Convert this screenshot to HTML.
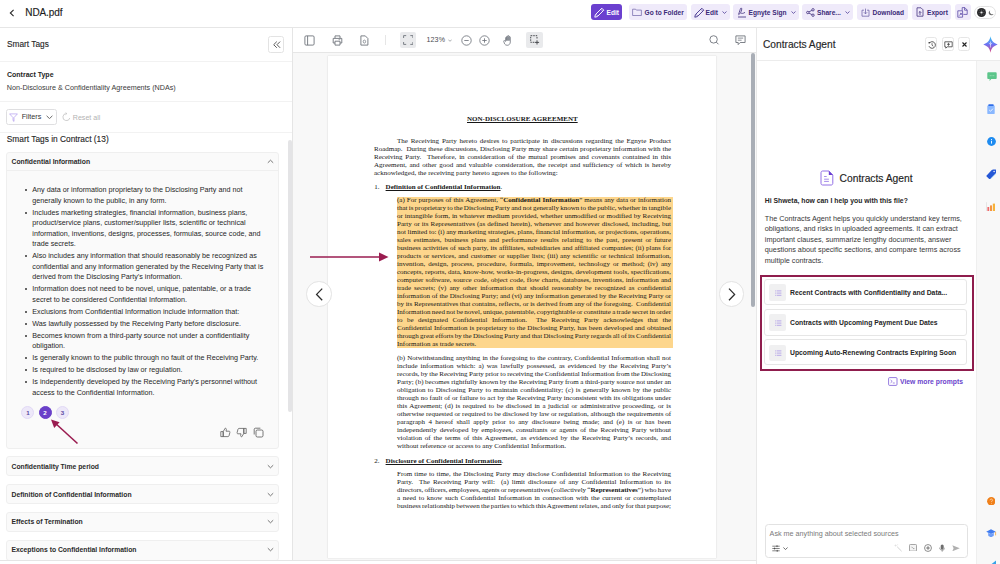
<!DOCTYPE html>
<html><head><meta charset="utf-8">
<style>
*{box-sizing:border-box;margin:0;padding:0}
html,body{width:1000px;height:564px;overflow:hidden;background:#fff;font-family:"Liberation Sans",sans-serif;color:#222}
.a{position:absolute}
.nw{white-space:nowrap}
svg{display:block}
/* top bar */
#top{left:0;top:0;width:1000px;height:28px;border-bottom:1px solid #e6e6e6;background:#fff}
.tb{position:absolute;top:4px;height:16px;border-radius:3px;background:#efeafa;color:#3b2a78;font-weight:bold;font-size:6.6px;line-height:17px;white-space:nowrap}
/* left */
#left{left:0;top:28px;width:293px;height:533px;border-right:1px solid #e5e5e5;border-bottom:1px solid #e5e5e5;background:#fff}
.sep{position:absolute;left:0;width:292px;height:1px;background:#f2f2f2}
.acc{position:absolute;left:6px;width:273px;background:#fafafa;border:1px solid #efefef;border-radius:3px}
.acct{position:absolute;left:11.5px;font-weight:bold;font-size:6.8px;line-height:10px;color:#2a2a2a;white-space:nowrap}
.ul{position:absolute;left:32.3px;font-size:7.2px;line-height:10.5px;color:#262626;white-space:nowrap}
.ul div{position:relative;margin-bottom:1.5px}
.ul div:before{content:"";position:absolute;left:-7.6px;top:4.1px;width:2.4px;height:2.4px;border-radius:50%;background:#333}
.pg{position:absolute;top:405.9px;width:13px;height:13px;border-radius:50%;background:#ede8f9;border:0.6px solid #e2d9f6;color:#5b48a0;font-size:6.2px;line-height:11.8px;text-align:center;font-weight:bold}
#viewer{left:293px;top:28px;width:464px;height:533px;background:#f8f8f8;border-bottom:1px solid #e5e5e5;overflow:hidden}
.pdf{position:absolute;font-family:"Liberation Serif",serif;font-size:7px;line-height:8px;color:#161616;white-space:nowrap}
.pdf div{height:8px;overflow:visible}
.j{text-align:justify;text-align-last:justify}
.pdf b{font-weight:bold}
.pdf b[style]{text-decoration-thickness:0.55px;text-underline-offset:0.9px}
.ic{position:absolute}
#agent{left:756px;top:28px;width:220px;height:536px;background:#fff;border-left:1px solid #e8e8e8}
#rail{left:975.8px;top:60.5px;width:24.2px;height:503.5px;background:#f8f8f8;border-left:1px solid #efefef}
.hb{position:absolute;top:37.3px;width:12px;height:13.3px;border:1px solid #e6e6e6;border-radius:2.5px;background:#fff}
.card{position:absolute;left:763.8px;width:203.2px;border:1px solid #e6e6e6;border-radius:3px;background:#fff}
.cico{position:absolute;left:4.5px;top:4.3px;width:16.5px;height:16.5px;border-radius:2px;background:#f0f0f1}
.ctx{position:absolute;left:25.2px;font-weight:bold;font-size:6.8px;line-height:10px;color:#262626;white-space:nowrap}
</style></head>
<body>
<div id="top" class="a">
<svg class="a" style="left:9px;top:8.5px" width="6" height="8" viewBox="0 0 6 8"><path d="M4.6 0.8L1.3 4l3.3 3.2" fill="none" stroke="#262626" stroke-width="1.05"/></svg>
<div class="a nw" style="left:25.3px;top:7.2px;font-size:10px;line-height:12px;color:#1d1d1d;letter-spacing:-0.1px;-webkit-text-stroke:0.15px #1d1d1d">NDA.pdf</div>
<div class="tb" style="left:591px;width:31px;background:#6b40cf;color:#fff">
 <svg class="a" style="left:3.2px;top:3px" width="11" height="11" viewBox="0 0 11 11"><path d="M0.8 10.2L1.4 7.6 7.8 1.2 9.8 3.2 3.4 9.6z" fill="none" stroke="#fff" stroke-width="0.95" stroke-linejoin="round"/><path d="M2 7.2l1.8 1.8M6.8 2.2l1.8 1.8" stroke="#fff" stroke-width="0.6"/></svg>
 <span class="a" style="left:15.5px;top:0">Edit</span></div>
<div class="tb" style="left:629px;width:58px">
 <svg class="a" style="left:3px;top:4px" width="10" height="8" viewBox="0 0 10 8"><path d="M0.6 1.2h3l0.8 0.9h5v5.4H0.6z" fill="none" stroke="#6d62a6" stroke-width="0.7"/></svg>
 <span class="a" style="left:15.5px;top:0">Go to Folder</span></div>
<div class="tb" style="left:690.5px;width:39px">
 <svg class="a" style="left:3.2px;top:3px" width="11" height="11" viewBox="0 0 11 11"><path d="M0.8 10.2L1.4 7.6 7.8 1.2 9.8 3.2 3.4 9.6z" fill="none" stroke="#4a3a90" stroke-width="0.95" stroke-linejoin="round"/><path d="M2 7.2l1.8 1.8M6.8 2.2l1.8 1.8" stroke="#4a3a90" stroke-width="0.6"/></svg>
 <span class="a" style="left:15px;top:0">Edit</span>
 <svg class="a" style="left:31px;top:6.5px" width="5" height="3" viewBox="0 0 5 3"><path d="M0.5 0.5L2.5 2.4 4.5 0.5" fill="none" stroke="#4f3f98" stroke-width="0.8"/></svg></div>
<div class="tb" style="left:733px;width:65.5px">
 <svg class="a" style="left:3.5px;top:3px" width="10" height="11" viewBox="0 0 10 11"><path d="M1.5 7.5C2.5 5 3 2.5 3.8 1.2 4.6 0.6 5.2 1.8 4.2 4.2 3.5 6 2.6 7.2 1.8 7.8M4 6.5C5 5.8 5.5 6.8 6.4 6.2L8 5.4M1 10h8" fill="none" stroke="#3b2a78" stroke-width="0.8"/></svg>
 <span class="a" style="left:15.5px;top:0">Egnyte Sign</span>
 <svg class="a" style="left:58px;top:6.5px" width="5" height="3" viewBox="0 0 5 3"><path d="M0.5 0.5L2.5 2.4 4.5 0.5" fill="none" stroke="#4f3f98" stroke-width="0.8"/></svg></div>
<div class="tb" style="left:802px;width:51px">
 <svg class="a" style="left:3.5px;top:3.5px" width="9" height="9" viewBox="0 0 9 9"><circle cx="1.8" cy="4.5" r="1.2" fill="none" stroke="#3b2a78" stroke-width="0.8"/><circle cx="7" cy="1.8" r="1.2" fill="none" stroke="#3b2a78" stroke-width="0.8"/><circle cx="7" cy="7.2" r="1.2" fill="none" stroke="#3b2a78" stroke-width="0.8"/><path d="M2.9 3.9l3-1.5M2.9 5.1l3 1.5" stroke="#3b2a78" stroke-width="0.8"/></svg>
 <span class="a" style="left:15px;top:0">Share...</span>
 <svg class="a" style="left:43px;top:6.5px" width="5" height="3" viewBox="0 0 5 3"><path d="M0.5 0.5L2.5 2.4 4.5 0.5" fill="none" stroke="#4f3f98" stroke-width="0.8"/></svg></div>
<div class="tb" style="left:857px;width:51px">
 <svg class="a" style="left:4px;top:3.5px" width="9" height="9" viewBox="0 0 9 9"><path d="M3 2.2H1v6h7v-6H6M4.5 0.6v5.2M2.8 4.2l1.7 1.7 1.7-1.7" fill="none" stroke="#6d62a6" stroke-width="0.75"/></svg>
 <span class="a" style="left:15.5px;top:0">Download</span></div>
<div class="tb" style="left:911.5px;width:39.5px">
 <svg class="a" style="left:4px;top:3px" width="8" height="10" viewBox="0 0 8 10"><path d="M1 0.8h4l2 2v6.4H1zM4 8V4.5M2.7 5.8L4 4.5l1.3 1.3" fill="none" stroke="#3b2a78" stroke-width="0.75"/></svg>
 <span class="a" style="left:15.5px;top:0">Export</span></div>
<div class="tb" style="left:954.5px;width:16.5px">
 <svg class="a" style="left:2.5px;top:2.8px" width="11" height="11" viewBox="0 0 11 11"><path d="M5.2 3.6V0.6h2.6l2.4 2.4v4.4H6.4M7.6 0.6v2.6h2.6M0.8 3.8h4.8v6.4H0.8zM2.2 8.6l2-2M4.4 7.8V6.4H3" fill="none" stroke="#5a4aa6" stroke-width="0.8" stroke-linejoin="round"/></svg></div>
<div class="a" style="left:974.3px;top:5.8px;width:22.2px;height:12.8px;border:0.8px solid #e3e3e3;border-radius:6.5px;background:#fff">
 <div class="a" style="left:1.3px;top:1.2px;width:9.2px;height:9.2px;border-radius:50%;background:#2b2b2d"></div>
 <svg class="a" style="left:2.4px;top:2.3px" width="7" height="7" viewBox="0 0 7 7"><circle cx="3.5" cy="3.5" r="1.1" fill="#eee"/><path d="M3.5 0.6v1M3.5 5.4v1M0.6 3.5h1M5.4 3.5h1M1.5 1.5l0.7 0.7M4.8 4.8l0.7 0.7M1.5 5.5l0.7-0.7M4.8 2.2l0.7-0.7" stroke="#999" stroke-width="0.45"/></svg>
 <svg class="a" style="left:12.6px;top:3.3px" width="6" height="6" viewBox="0 0 6 6"><path d="M2.2 0.4A2.6 2.6 0 1 0 5.6 4 2.6 2.6 0 0 1 2.2 0.4z" fill="#6a6a6a"/></svg></div>
</div>
<div id="left" class="a"></div>
<div class="a nw" style="left:7px;top:38.9px;font-size:8.3px;line-height:10px;color:#262626;-webkit-text-stroke:0.12px #262626">Smart Tags</div>
<div class="a" style="left:268px;top:36px;width:16.3px;height:16.6px;border:1px solid #e3e3e3;border-radius:2.5px;background:#fff">
 <svg class="a" style="left:3.6px;top:3.9px" width="8" height="8" viewBox="0 0 8 8"><path d="M3.8 0.6L0.7 3.7 3.8 6.8M7.1 0.6L4 3.7 7.1 6.8" fill="none" stroke="#333" stroke-width="0.8"/></svg></div>
<div class="sep" style="top:61px"></div>
<div class="a nw" style="left:7px;top:69.8px;font-size:7px;line-height:10px;font-weight:bold;color:#262626">Contract Type</div>
<div class="a nw" style="left:6.8px;top:82.5px;font-size:7.2px;line-height:10px;color:#3a3a3a">Non-Disclosure &amp; Confidentiality Agreements (NDAs)</div>
<div class="sep" style="top:100.5px"></div>
<div class="a" style="left:6px;top:109px;width:50.8px;height:15.6px;border:1px solid #dfdfe1;border-radius:2.5px;background:#fff">
 <svg class="a" style="left:2.3px;top:3.2px" width="9" height="9" viewBox="0 0 9 9"><path d="M0.6 0.9h7.8L5 4.6v3.8L4 7.6V4.6z" fill="none" stroke="#a58ceb" stroke-width="0.6" stroke-linejoin="round"/></svg>
 <span class="a nw" style="left:14.7px;top:2.3px;font-size:7.2px;line-height:10px;color:#333">Filters</span>
 <svg class="a" style="left:38.6px;top:4.6px" width="7" height="4.5" viewBox="0 0 7 4.5"><path d="M0.6 0.8L3.5 3.6 6.4 0.8" fill="none" stroke="#444" stroke-width="0.8"/></svg></div>
<svg class="a" style="left:61.6px;top:112.3px" width="9" height="9.5" viewBox="0 0 9 9.5"><path d="M4.5 1.6A3.5 3.5 0 1 0 7.8 6" fill="none" stroke="#bdbdbd" stroke-width="0.75"/><path d="M3.6 0.5L4.8 1.6 3.6 2.7" fill="none" stroke="#bdbdbd" stroke-width="0.75"/></svg>
<div class="a nw" style="left:72.8px;top:112.5px;font-size:7.1px;line-height:10px;color:#b3b3b3">Reset all</div>
<div class="sep" style="top:132px"></div>
<div class="a nw" style="left:6.8px;top:134.1px;font-size:8.35px;line-height:10px;color:#262626;-webkit-text-stroke:0.12px #262626">Smart Tags in Contract (13)</div>
<div class="a" style="left:288px;top:139.5px;width:3.5px;height:272px;border-radius:2px;background:#e4e4e6"></div>
<div class="acc" style="top:152.2px;height:297.3px">
 <div class="a" style="left:0;top:16.6px;width:271px;height:1px;background:#efefef"></div></div>
<div class="acct" style="top:156.8px">Confidential Information</div>
<svg class="a" style="left:267px;top:159px" width="7" height="5" viewBox="0 0 7 5"><path d="M0.8 3.8L3.5 1.2 6.2 3.8" fill="none" stroke="#555" stroke-width="0.8"/></svg>
<div class="ul" style="top:185px">
<div>Any data or information proprietary to the Disclosing Party and not<br>generally known to the public, in any form.</div>
<div>Includes marketing strategies, financial information, business plans,<br>product/service plans, customer/supplier lists, scientific or technical<br>information, inventions, designs, processes, formulas, source code, and<br>trade secrets.</div>
<div>Also includes any information that should reasonably be recognized as<br>confidential and any information generated by the Receiving Party that is<br>derived from the Disclosing Party&#8217;s information.</div>
<div>Information does not need to be novel, unique, patentable, or a trade<br>secret to be considered Confidential Information.</div>
<div>Exclusions from Confidential Information include information that:</div>
<div>Was lawfully possessed by the Receiving Party before disclosure.</div>
<div>Becomes known from a third-party source not under a confidentiality<br>obligation.</div>
<div>Is generally known to the public through no fault of the Receiving Party.</div>
<div>Is required to be disclosed by law or regulation.</div>
<div>Is independently developed by the Receiving Party&#8217;s personnel without<br>access to the Confidential Information.</div>
</div>
<div class="pg" style="left:21.4px">1</div>
<div class="pg" style="left:38.5px;background:#6a40c9;border-color:#6a40c9;color:#fff">2</div>
<div class="pg" style="left:55.9px">3</div>
<svg class="a" style="left:49px;top:417px" width="32" height="30" viewBox="0 0 32 30"><path d="M28.5 26.5L5.5 5.5" stroke="#9a1c50" stroke-width="1.6"/><path d="M2 2.6L10.6 5.2 5.2 11z" fill="#9a1c50"/></svg>
<svg class="a" style="left:219.5px;top:427px" width="11" height="11" viewBox="0 0 11 11"><path d="M3.2 4.6L5.2 1.2c0.9 0 1.3 0.6 1.1 1.5L6 4.2h3c0.7 0 1.1 0.6 0.9 1.2L9 8.8c-0.2 0.5-0.6 0.8-1.1 0.8H3.2zM0.8 4.6h2.4v5H0.8z" fill="none" stroke="#555" stroke-width="0.75" stroke-linejoin="round"/></svg>
<svg class="a" style="left:236px;top:427px" width="11" height="11" viewBox="0 0 11 11"><g transform="rotate(180 5.5 5.5)"><path d="M3.2 4.6L5.2 1.2c0.9 0 1.3 0.6 1.1 1.5L6 4.2h3c0.7 0 1.1 0.6 0.9 1.2L9 8.8c-0.2 0.5-0.6 0.8-1.1 0.8H3.2zM0.8 4.6h2.4v5H0.8z" fill="none" stroke="#555" stroke-width="0.75" stroke-linejoin="round"/></g></svg>
<svg class="a" style="left:253px;top:427px" width="11" height="11" viewBox="0 0 11 11"><rect x="3" y="3" width="7" height="7" rx="1.4" fill="none" stroke="#555" stroke-width="0.8"/><path d="M1.2 7.5V2.4c0-0.7 0.5-1.2 1.2-1.2h5" fill="none" stroke="#555" stroke-width="0.8"/></svg>
<div class="acc" style="top:455.8px;height:20.2px"></div>
<div class="acct" style="top:461.8px">Confidentiality Time period</div>
<div class="acc" style="top:484.4px;height:19.4px"></div>
<div class="acct" style="top:489.7px">Definition of Confidential Information</div>
<div class="acc" style="top:512px;height:19.5px"></div>
<div class="acct" style="top:516.7px">Effects of Termination</div>
<div class="acc" style="top:540px;height:21px"></div>
<div class="acct" style="top:544.6px">Exceptions to Confidential Information</div>
<svg class="a" style="left:267px;top:463.5px" width="7" height="5" viewBox="0 0 7 5"><path d="M0.8 1.2L3.5 3.8 6.2 1.2" fill="none" stroke="#555" stroke-width="0.8"/></svg>
<svg class="a" style="left:267px;top:491.5px" width="7" height="5" viewBox="0 0 7 5"><path d="M0.8 1.2L3.5 3.8 6.2 1.2" fill="none" stroke="#555" stroke-width="0.8"/></svg>
<svg class="a" style="left:267px;top:519px" width="7" height="5" viewBox="0 0 7 5"><path d="M0.8 1.2L3.5 3.8 6.2 1.2" fill="none" stroke="#555" stroke-width="0.8"/></svg>
<svg class="a" style="left:267px;top:547px" width="7" height="5" viewBox="0 0 7 5"><path d="M0.8 1.2L3.5 3.8 6.2 1.2" fill="none" stroke="#555" stroke-width="0.8"/></svg>
<div class="a" style="left:0;top:560px;width:757px;height:4px;background:#fff;border-top:1px solid #e5e5e5"></div>

<div id="viewer" class="a"></div>
<div class="a" style="left:293px;top:28px;width:464px;height:24.5px;background:#fff;border-bottom:1px solid #e6e6e6"></div>
<svg class="ic" style="left:304px;top:34.5px" width="11" height="11" viewBox="0 0 11 11"><rect x="0.9" y="0.9" width="9.2" height="9.2" rx="1.2" fill="none" stroke="#6f747c" stroke-width="0.9"/><path d="M3.6 0.9v9.2" stroke="#6f747c" stroke-width="0.9"/></svg>
<svg class="ic" style="left:331.5px;top:34.5px" width="11" height="11" viewBox="0 0 11 11"><path d="M3 3.2V0.9h5v2.3M3 8H1.2V3.4h8.6V8H8M3 6.2h5v3.9H3z" fill="none" stroke="#6f747c" stroke-width="0.9" stroke-linejoin="round"/><path d="M6.5 4.6h1.8" stroke="#6f747c" stroke-width="0.6"/></svg>
<svg class="ic" style="left:359.5px;top:34.5px" width="9" height="11" viewBox="0 0 9 11"><path d="M0.9 0.9h4.4l2.6 2.6v6.6H0.9z" fill="none" stroke="#6f747c" stroke-width="0.9" stroke-linejoin="round"/><ellipse cx="4.4" cy="6.6" rx="1.2" ry="1.5" fill="none" stroke="#6f747c" stroke-width="0.7"/></svg>
<div class="a" style="left:385px;top:35px;width:1px;height:10px;background:#e6e6e6"></div>
<div class="a" style="left:399.5px;top:32px;width:16.5px;height:16px;border-radius:2px;background:#e9eaec"></div>
<svg class="ic" style="left:402.5px;top:35px" width="10.5" height="10" viewBox="0 0 10.5 10"><path d="M0.6 3V0.6h2.6M7.3 0.6h2.6V3M9.9 7v2.4H7.3M3.2 9.4H0.6V7" fill="none" stroke="#6f747c" stroke-width="0.9"/></svg>
<div class="a nw" style="left:426.5px;top:35.6px;font-size:7.1px;line-height:9px;color:#4a4d52;letter-spacing:0.1px">123%</div>
<svg class="ic" style="left:447.5px;top:38.5px" width="4" height="3" viewBox="0 0 4 3"><path d="M0.3 0.6L2 2.3 3.7 0.6" fill="none" stroke="#6f747c" stroke-width="0.6"/></svg>
<svg class="ic" style="left:461px;top:34.8px" width="11" height="11" viewBox="0 0 11 11"><circle cx="5.5" cy="5.5" r="4.7" fill="none" stroke="#6f747c" stroke-width="0.85"/><path d="M3.3 5.5h4.4" stroke="#6f747c" stroke-width="0.85"/></svg>
<svg class="ic" style="left:479px;top:34.8px" width="11" height="11" viewBox="0 0 11 11"><circle cx="5.5" cy="5.5" r="4.7" fill="none" stroke="#6f747c" stroke-width="0.85"/><path d="M3.3 5.5h4.4M5.5 3.3v4.4" stroke="#6f747c" stroke-width="0.85"/></svg>
<svg class="ic" style="left:502.5px;top:34.5px" width="10.5" height="11" viewBox="0 0 10.5 11"><path d="M2.6 6.4V2.8c0-0.8 1.1-0.8 1.1 0V5.6V1.6c0-0.8 1.2-0.8 1.2 0v4V1.2c0-0.8 1.2-0.8 1.2 0v4.4V2.2c0-0.8 1.2-0.8 1.2 0v4.8c0 1.9-1.3 3.3-3.1 3.3-1.2 0-1.9-0.5-2.6-1.4L0.8 6.6c-0.5-0.7 0.3-1.4 1-0.8z" fill="none" stroke="#6f747c" stroke-width="0.8" stroke-linejoin="round"/></svg>
<div class="a" style="left:526px;top:32px;width:16.5px;height:16px;border-radius:2px;background:#e9eaec"></div>
<svg class="ic" style="left:529.5px;top:35.3px" width="10" height="10" viewBox="0 0 10 10"><path d="M0.7 0.7h6.3v3.5M4.3 7.3H0.7V0.7" fill="none" stroke="#3c3f44" stroke-width="0.9" stroke-dasharray="1.6 0.9"/><path d="M7 5.3v4.2M4.9 7.4h4.2" stroke="#3c3f44" stroke-width="0.9"/></svg>
<svg class="ic" style="left:708.6px;top:34.6px" width="11" height="11" viewBox="0 0 11 11"><circle cx="4.6" cy="4.4" r="3.7" fill="none" stroke="#6f747c" stroke-width="0.9"/><path d="M7.3 7.1l2.2 2.2" stroke="#6f747c" stroke-width="0.95"/></svg>
<svg class="ic" style="left:735px;top:34.5px" width="11" height="11" viewBox="0 0 11 11"><path d="M0.9 0.9h9.2v6.6H5.2L3.2 9.6V7.5H0.9z" fill="none" stroke="#6f747c" stroke-width="0.9" stroke-linejoin="round"/><path d="M2.8 3.1h5.4M2.8 5.2h3.8" stroke="#6f747c" stroke-width="0.8"/></svg>
<div class="a" style="left:327.5px;top:55.5px;width:388.6px;height:502.5px;background:#fff;box-shadow:0 0 1px 0.3px #d9d9d9"></div>
<div class="a" style="left:751px;top:53px;width:3.6px;height:254px;border-radius:2px;background:#a9aeb6"></div>
<div class="a" style="left:397px;top:196.7px;width:275.6px;height:151.7px;background:#fdd68c"></div>
<div class="pdf" style="left:467px;top:115.1px"><b style="text-decoration:underline">NON-DISCLOSURE AGREEMENT</b></div>
<div class="pdf" style="left:374px;top:137.04px;width:297px">
<div class="j" style="padding-left:23px">The Receiving Party hereto desires to participate in discussions regarding the Egnyte Product</div>
<div class="j">Roadmap.&nbsp; During these discussions, Disclosing Party may share certain proprietary information with the</div>
<div class="j">Receiving Party.&nbsp; Therefore, in consideration of the mutual promises and covenants contained in this</div>
<div class="j">Agreement, and other good and valuable consideration, the receipt and sufficiency of which is hereby</div>
<div>acknowledged, the receiving party hereto agrees to the following:</div>
</div>
<div class="pdf" style="left:374.3px;top:182.5px">1.</div><div class="pdf" style="left:385.6px;top:182.5px"><b style="text-decoration:underline">Definition of Confidential Information</b>.</div>
<div class="pdf" style="left:397px;top:196.04px;width:274px">
<div class="j">(a) For purposes of this Agreement, &#8220;<b>Confidential Information</b>&#8221; means any data or information</div>
<div class="j" style="word-spacing:-0.453px">that is proprietary to the Disclosing Party and not generally known to the public, whether in tangible</div>
<div class="j">or intangible form, in whatever medium provided, whether unmodified or modified by Receiving</div>
<div class="j">Party or its Representatives (as defined herein), whenever and however disclosed, including, but</div>
<div class="j" style="word-spacing:-0.175px">not limited to: (i) any marketing strategies, plans, financial information, or projections, operations,</div>
<div class="j">sales estimates, business plans and performance results relating to the past, present or future</div>
<div class="j">business activities of such party, its affiliates, subsidiaries and affiliated companies; (ii) plans for</div>
<div class="j">products or services, and customer or supplier lists; (iii) any scientific or technical information,</div>
<div class="j">invention, design, process, procedure, formula, improvement, technology or method; (iv) any</div>
<div class="j">concepts, reports, data, know-how, works-in-progress, designs, development tools, specifications,</div>
<div class="j">computer software, source code, object code, flow charts, databases, inventions, information and</div>
<div class="j">trade secrets; (v) any other information that should reasonably be recognized as confidential</div>
<div class="j">information of the Disclosing Party; and (vi) any information generated by the Receiving Party or</div>
<div class="j" style="word-spacing:-0.130px">by its Representatives that contains, reflects, or is derived from any of the foregoing.&nbsp; Confidential</div>
<div class="j" style="word-spacing:-0.483px">Information need not be novel, unique, patentable, copyrightable or constitute a trade secret in order</div>
<div class="j">to be designated Confidential Information.&nbsp; The Receiving Party acknowledges that the</div>
<div class="j">Confidential Information is proprietary to the Disclosing Party, has been developed and obtained</div>
<div class="j" style="word-spacing:-0.473px">through great efforts by the Disclosing Party and that Disclosing Party regards all of its Confidential</div>
<div>Information as trade secrets.</div>
</div>
<div class="pdf" style="left:397px;top:354.44px;width:274px">
<div class="j">(b) Notwithstanding anything in the foregoing to the contrary, Confidential Information shall not</div>
<div class="j">include information which: a) was lawfully possessed, as evidenced by the Receiving Party&#8217;s</div>
<div class="j" style="word-spacing:-0.326px">records, by the Receiving Party prior to receiving the Confidential Information from the Disclosing</div>
<div class="j" style="word-spacing:-0.169px">Party; (b) becomes rightfully known by the Receiving Party from a third-party source not under an</div>
<div class="j">obligation to Disclosing Party to maintain confidentiality; (c) is generally known by the public</div>
<div class="j">through no fault of or failure to act by the Receiving Party inconsistent with its obligations under</div>
<div class="j">this Agreement; (d) is required to be disclosed in a judicial or administrative proceeding, or is</div>
<div class="j" style="word-spacing:-0.040px">otherwise requested or required to be disclosed by law or regulation, although the requirements of</div>
<div class="j">paragraph 4 hereof shall apply prior to any disclosure being made; and (e) is or has been</div>
<div class="j">independently developed by employees, consultants or agents of the Receiving Party without</div>
<div class="j">violation of the terms of this Agreement, as evidenced by the Receiving Party&#8217;s records, and</div>
<div>without reference or access to any Confidential Information.</div>
</div>
<div class="pdf" style="left:374.3px;top:456.64px">2.</div><div class="pdf" style="left:385.6px;top:456.64px"><b style="text-decoration:underline">Disclosure of Confidential Information</b>.</div>
<div class="pdf" style="left:397px;top:470.34px;width:274px">
<div class="j">From time to time, the Disclosing Party may disclose Confidential Information to the Receiving</div>
<div class="j">Party.&nbsp; The Receiving Party will:&nbsp; (a) limit disclosure of any Confidential Information to its</div>
<div class="j" style="word-spacing:-0.520px">directors, officers, employees, agents or representatives (collectively &#8220;<b>Representatives</b>&#8221;) who have</div>
<div class="j">a need to know such Confidential Information in connection with the current or contemplated</div>
<div class="j" style="word-spacing:-0.485px">business relationship between the parties to which this Agreement relates, and only for that purpose;</div>
</div>
<div class="a" style="left:306.3px;top:281.4px;width:25.4px;height:25.4px;border-radius:50%;background:#fff;border:1px solid #e3e3e3"></div>
<svg class="ic" style="left:313px;top:288px" width="12" height="13" viewBox="0 0 12 13"><path d="M9.2 0.6L3.6 6.4l5.6 5.8" fill="none" stroke="#2d2d2d" stroke-width="1.3"/></svg>
<div class="a" style="left:718.8px;top:281.4px;width:25.4px;height:25.4px;border-radius:50%;background:#fff;border:1px solid #e3e3e3"></div>
<svg class="ic" style="left:725.5px;top:288px" width="12" height="13" viewBox="0 0 12 13"><path d="M3 0.6l5.6 5.8L3 12.2" fill="none" stroke="#2d2d2d" stroke-width="1.3"/></svg>
<svg class="ic" style="left:309px;top:251px" width="81" height="12" viewBox="0 0 81 12"><path d="M1 6h71" stroke="#9a1c50" stroke-width="1.5"/><path d="M70 1.5L79.5 6 70 10.5z" fill="#9a1c50"/></svg>

<div id="agent" class="a"></div><div id="rail" class="a"></div>
<svg class="a" style="left:986.5px;top:72px" width="10" height="9.5" viewBox="0 0 10 9.5"><path d="M1.4 0.3h7.2c0.6 0 1.1 0.5 1.1 1.1v4.6c0 0.6-0.5 1.1-1.1 1.1H4.2L2.6 8.9V7.1H1.4C0.8 7.1 0.3 6.6 0.3 6V1.4C0.3 0.8 0.8 0.3 1.4 0.3z" fill="#5cc58a"/><path d="M2.8 3.7h0.8M4.6 3.7h0.8M6.4 3.7h0.8" stroke="#c8f0d6" stroke-width="0.8"/></svg>
<svg class="a" style="left:987.3px;top:103.8px" width="8" height="10.5" viewBox="0 0 8 10.5"><rect x="0.3" y="1.3" width="7.4" height="9" rx="1.2" fill="#8ab8ff"/><rect x="1.4" y="0.2" width="5.2" height="1.9" rx="0.5" fill="#2f6de8"/><path d="M2.2 6l1.3 1.3 2.4-2.6" fill="none" stroke="#fff" stroke-width="0.8"/></svg>
<svg class="a" style="left:986.8px;top:137px" width="9" height="9" viewBox="0 0 9 9"><circle cx="4.5" cy="4.5" r="4.4" fill="#1f8cf0"/><path d="M4.5 3.8v2.8" stroke="#fff" stroke-width="0.9"/><circle cx="4.5" cy="2.5" r="0.55" fill="#fff"/></svg>
<svg class="a" style="left:985.8px;top:169px" width="10.5" height="10" viewBox="0 0 10.5 10"><path d="M0.6 6.6L5.8 1.1C6.2 0.7 6.6 0.5 7.2 0.5h2.2c0.4 0 0.7 0.3 0.7 0.7v2.2c0 0.5-0.2 0.9-0.6 1.3L4.3 9.9C4 10.2 3.5 10.2 3.2 9.9L0.6 7.5C0.3 7.2 0.3 6.9 0.6 6.6z" fill="#2557d6"/><circle cx="8.1" cy="2.5" r="0.7" fill="#fff"/><path d="M4.8 9.6l5.2-5.2" stroke="#9fd6f5" stroke-width="0.6"/></svg>
<svg class="a" style="left:986.3px;top:201.8px" width="10" height="9.5" viewBox="0 0 10 9.5"><path d="M0.4 0.2v9" stroke="#d3d3d3" stroke-width="0.6"/><rect x="1.4" y="5" width="1.8" height="4.2" fill="#ef6b6b"/><rect x="4.1" y="3.4" width="1.8" height="5.8" fill="#f38a2e"/><rect x="6.8" y="1.6" width="2.2" height="7.6" fill="#f7b23a"/></svg>
<svg class="a" style="left:986.8px;top:496.8px" width="8.6" height="8.6" viewBox="0 0 9 9"><circle cx="4.5" cy="4.5" r="4.4" fill="#f0801a"/><path d="M3.2 3.4c0-0.8 0.6-1.3 1.3-1.3s1.3 0.5 1.3 1.2c0 0.9-1.2 1-1.2 1.9" fill="none" stroke="#ffe0c0" stroke-width="0.75"/><circle cx="4.6" cy="6.6" r="0.45" fill="#ffe0c0"/></svg>
<svg class="a" style="left:986px;top:529.2px" width="10.5" height="8.6" viewBox="0 0 10.5 8.6"><path d="M5 0.3l4.8 2.4L5 5.1 0.2 2.7z" fill="#3f7bf0"/><path d="M2.2 3.8v2.6c0.8 1 1.8 1.5 2.8 1.5s2-0.5 2.8-1.5V3.8L5 5.2z" fill="#6d9cf7"/><path d="M9.6 2.8v3.6" stroke="#f3a53c" stroke-width="0.8"/></svg>
<svg class="a" style="left:990px;top:559.5px" width="7" height="5" viewBox="0 0 7 5"><path d="M1 4.5L6 0.5V4.5z" fill="#35a3e8"/></svg>

<div class="a nw" style="left:763px;top:38.6px;font-size:10.2px;line-height:12px;color:#262626;-webkit-text-stroke:0.15px #262626">Contracts Agent</div>
<div class="hb" style="left:925.3px"><svg class="a" style="left:2px;top:2.5px" width="8" height="8" viewBox="0 0 8 8"><path d="M1.3 2.2A3.3 3.3 0 1 1 1 5.2" fill="none" stroke="#333" stroke-width="0.8"/><path d="M4 2.2V4.2l1.3 1" fill="none" stroke="#333" stroke-width="0.7"/><circle cx="1.2" cy="1.8" r="0.75" fill="#222"/></svg></div>
<div class="hb" style="left:941.6px"><svg class="a" style="left:1.5px;top:2.5px" width="9" height="8" viewBox="0 0 9 8"><path d="M0.8 0.8h7.4v5H3.2L1.8 7.2V5.8h-1z" fill="none" stroke="#333" stroke-width="0.75" stroke-linejoin="round"/><path d="M4.5 1.8v3M3 3.3h3" stroke="#333" stroke-width="0.7"/></svg></div>
<div class="hb" style="left:958.4px;width:11.5px"><svg class="a" style="left:1.9px;top:3.1px" width="7" height="7" viewBox="0 0 7 7"><path d="M1.5 1.5l4 4M5.5 1.5l-4 4" stroke="#222" stroke-width="1.1"/></svg></div>
<svg class="a" style="left:983px;top:35.5px" width="15" height="17" viewBox="0 0 15 17"><defs><linearGradient id="sg" x1="0" y1="0" x2="0" y2="1"><stop offset="0" stop-color="#33c6f5"/><stop offset="0.5" stop-color="#6e72f2"/><stop offset="1" stop-color="#e0457e"/></linearGradient></defs><path d="M7.5 0.3C8.3 4.6 10 6.8 14.7 8.5 10 10.2 8.3 12.4 7.5 16.7 6.7 12.4 5 10.2 0.3 8.5 5 6.8 6.7 4.6 7.5 0.3z" fill="url(#sg)"/><path d="M7.5 5.5v6M5.8 7l1.7 1.5L9.2 7" fill="none" stroke="#fff" stroke-width="0.7" opacity="0.8"/></svg>
<div class="a" style="left:756.5px;top:59.6px;width:220px;height:1px;background:#ececec"></div>
<div class="a" style="left:976px;top:59.6px;width:24px;height:1px;background:#ececec"></div>
<svg class="a" style="left:819.5px;top:169.5px" width="14" height="16" viewBox="0 0 14 16"><path d="M2.6 1h6.4l3.8 4v8.4c0 1-0.8 1.6-1.6 1.6H2.6c-1 0-1.6-0.7-1.6-1.6V2.6C1 1.7 1.7 1 2.6 1z" fill="none" stroke="#9270e6" stroke-width="1"/><path d="M8.8 0.9l4.1 4.2H8.8z" fill="#6a3fd0"/><path d="M4.1 6.5h2.6M4.1 9.2h4.8M4.1 11.4h4.8" stroke="#8f6ee6" stroke-width="0.8"/></svg>
<div class="a nw" style="left:839.6px;top:172.85px;font-size:10.26px;line-height:12px;color:#222;-webkit-text-stroke:0.15px #222">Contracts Agent</div>
<div class="a nw" style="left:764.8px;top:195.6px;font-size:6.83px;line-height:10px;font-weight:bold;color:#262626">Hi Shweta, how can I help you with this file?</div>
<div class="a nw" style="left:764.8px;top:213.85px;font-size:7.25px;line-height:10.5px;color:#383838">The Contracts Agent helps you quickly understand key terms,<br>obligations, and risks in uploaded agreements. It can extract<br>important clauses, summarize lengthy documents, answer<br>questions about specific sections, and compare terms across<br>multiple contracts.</div>
<div class="a" style="left:760.4px;top:274.8px;width:213.4px;height:96px;border:2px solid #8f1d4d"></div>
<div class="card" style="top:279.2px;height:25.6px"><div class="cico"><svg class="a" style="left:5.6px;top:5.4px" width="7" height="6" viewBox="0 0 7 6"><path d="M1.6 0.9h4.8M1.6 3.1h4.8M1.6 5.3h4.8" stroke="#9478e4" stroke-width="0.6"/><path d="M0.3 0.9h0.7M0.3 3.1h0.7M0.3 5.3h0.7" stroke="#8466de" stroke-width="0.6"/></svg></div><div class="ctx" style="top:8.2px">Recent Contracts with Confidentiality and Data...</div></div>
<div class="card" style="top:309.2px;height:26.4px"><div class="cico"><svg class="a" style="left:5.6px;top:5.4px" width="7" height="6" viewBox="0 0 7 6"><path d="M1.6 0.9h4.8M1.6 3.1h4.8M1.6 5.3h4.8" stroke="#9478e4" stroke-width="0.6"/><path d="M0.3 0.9h0.7M0.3 3.1h0.7M0.3 5.3h0.7" stroke="#8466de" stroke-width="0.6"/></svg></div><div class="ctx" style="top:7.6px">Contracts with Upcoming Payment Due Dates</div></div>
<div class="card" style="top:339.3px;height:25.3px"><div class="cico"><svg class="a" style="left:5.6px;top:5.4px" width="7" height="6" viewBox="0 0 7 6"><path d="M1.6 0.9h4.8M1.6 3.1h4.8M1.6 5.3h4.8" stroke="#9478e4" stroke-width="0.6"/><path d="M0.3 0.9h0.7M0.3 3.1h0.7M0.3 5.3h0.7" stroke="#8466de" stroke-width="0.6"/></svg></div><div class="ctx" style="top:7.5px">Upcoming Auto-Renewing Contracts Expiring Soon</div></div>
<svg class="a" style="left:887.5px;top:377px" width="10" height="9" viewBox="0 0 10 9"><rect x="0.6" y="0.6" width="8.4" height="7.8" rx="1" fill="none" stroke="#7b5ad8" stroke-width="0.8"/><path d="M2.6 3l1.6 1.4-1.6 1.4M4.8 6h2" fill="none" stroke="#7b5ad8" stroke-width="0.7"/></svg>
<div class="a nw" style="left:900px;top:376.6px;font-size:6.8px;line-height:10px;font-weight:bold;color:#6a44cc">View more prompts</div>
<div class="a" style="left:764.5px;top:524.2px;width:203.2px;height:34.1px;border:1px solid #e2e2e2;border-radius:3.5px;background:#fff"></div>
<div class="a nw" style="left:769.6px;top:529.2px;font-size:7.2px;line-height:10px;color:#7a7a7a">Ask me anything about selected sources</div>
<svg class="a" style="left:771.5px;top:544.5px" width="8" height="7" viewBox="0 0 8 7"><path d="M0.3 1.2h7.4M0.3 3.5h7.4M0.3 5.8h7.4" stroke="#333" stroke-width="0.6"/><path d="M5 0.3v1.8M2.6 2.6v1.8M5.2 4.9v1.8" stroke="#333" stroke-width="0.8"/></svg>
<svg class="a" style="left:782.5px;top:546.5px" width="5" height="3" viewBox="0 0 5 3"><path d="M0.4 0.5L2.5 2.5 4.6 0.5" fill="none" stroke="#333" stroke-width="0.7"/></svg>
<svg class="a" style="left:894px;top:543.8px" width="9" height="8" viewBox="0 0 9 8"><path d="M7.6 7.2L3.2 2.8" stroke="#cdcdcd" stroke-width="0.9"/><path d="M1.6 0.4v2.2M0.5 1.5h2.2M3.6 0.3v0.9" stroke="#d8d8d8" stroke-width="0.6"/></svg>
<svg class="a" style="left:908.8px;top:543.9px" width="8" height="7.6" viewBox="0 0 8 7.6"><rect x="0.45" y="0.45" width="7.1" height="6.7" rx="1" fill="#f4f4f4" stroke="#8a8a8a" stroke-width="0.8"/><path d="M2.6 2.8l1.2 1.4M4 4.6h1.4" fill="none" stroke="#666" stroke-width="0.55"/></svg>
<svg class="a" style="left:923.6px;top:543.8px" width="8" height="8" viewBox="0 0 8 8"><circle cx="4" cy="4" r="3.45" fill="none" stroke="#6a6a6a" stroke-width="0.75"/><path d="M4 2.2v3.6M2.2 4h3.6" stroke="#555" stroke-width="0.8"/></svg>
<svg class="a" style="left:938.6px;top:543.6px" width="6.4" height="8" viewBox="0 0 6.4 8"><path d="M3.2 0.4c0.9 0 1.5 0.8 1.5 1.7v2c0 0.9-0.6 1.6-1.5 1.6S1.7 5 1.7 4.1v-2c0-0.9 0.6-1.7 1.5-1.7z" fill="#6e6e6e"/><path d="M0.5 3.6c0 1.6 1.2 2.6 2.7 2.6s2.7-1 2.7-2.6M3.2 6.2v1.6" fill="none" stroke="#6e6e6e" stroke-width="0.6"/></svg>
<svg class="a" style="left:952.4px;top:544.5px" width="8" height="6.6" viewBox="0 0 8 6.6"><path d="M0.3 0.3L7.8 3.3 0.3 6.3 1.6 3.3z" fill="#b0b0b0"/></svg>

</body></html>
